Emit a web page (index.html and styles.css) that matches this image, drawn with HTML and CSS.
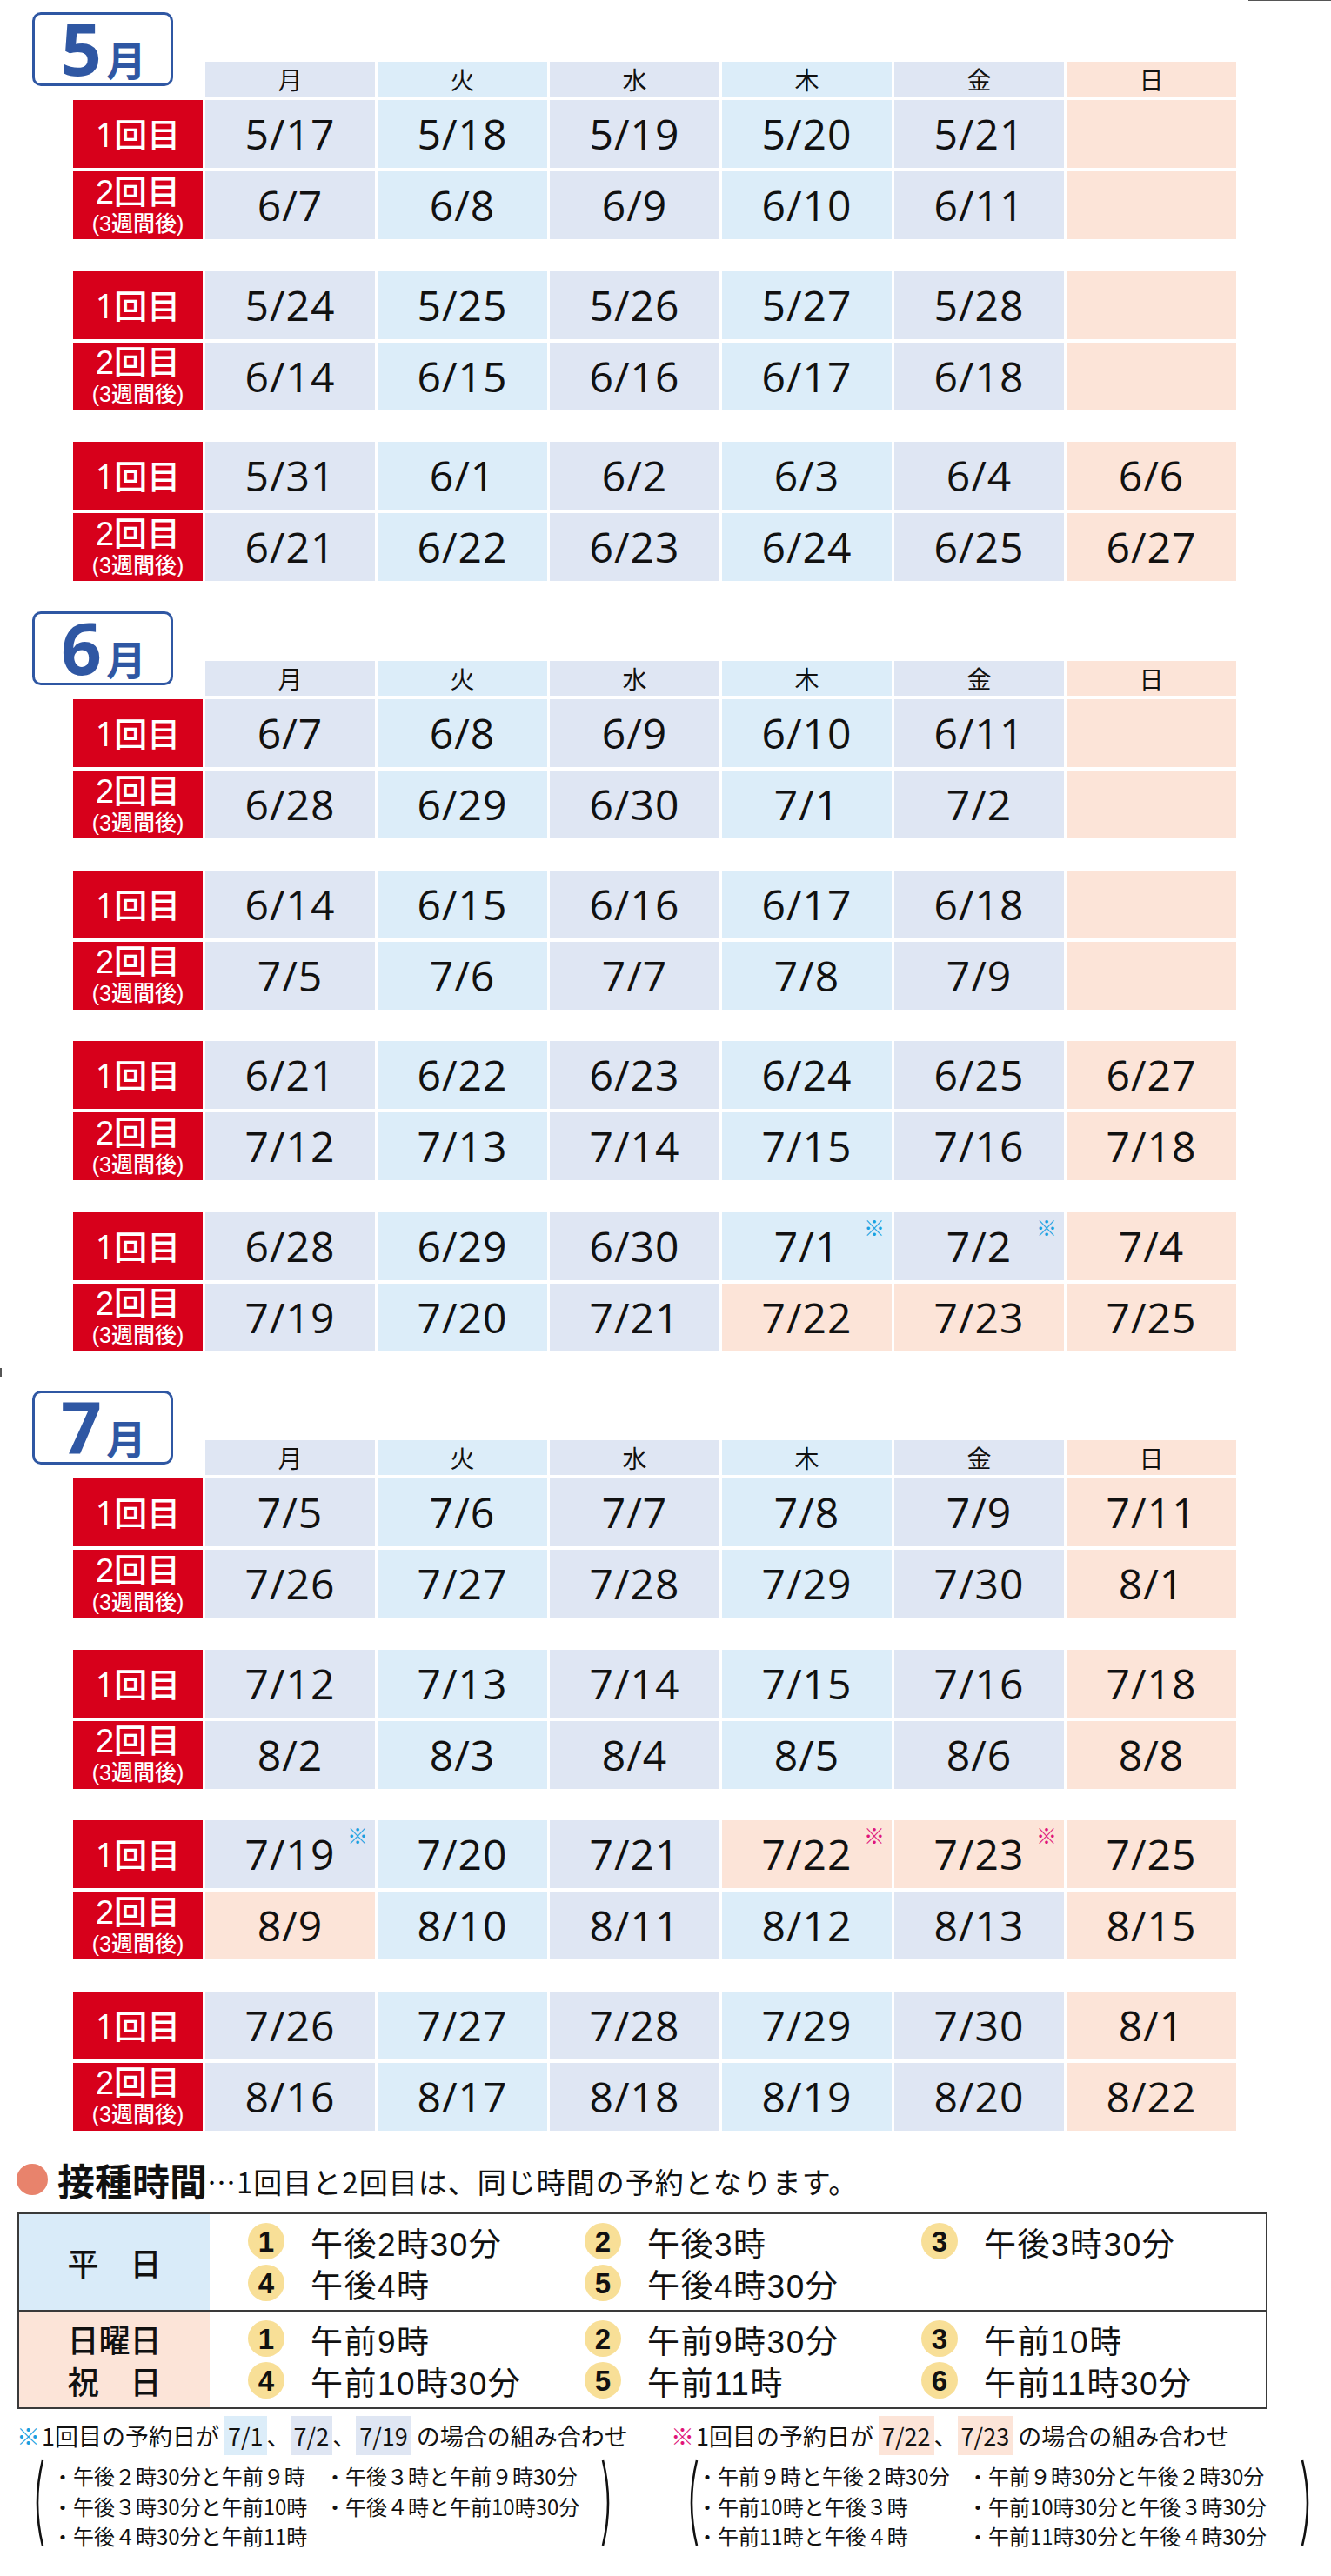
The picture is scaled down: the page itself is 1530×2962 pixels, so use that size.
FILE: index.html
```html
<!DOCTYPE html>
<html lang="ja">
<head>
<meta charset="utf-8">
<title>接種日程</title>
<link rel="stylesheet" href="styles.css">
</head>
<body>
<div class="page">
  <i class="edge-tr"></i>
  <i class="edge-l"></i>

  <!-- 5月 -->
  <section class="month">
    <div class="month-badge"><span class="mnum">5</span><span class="mchar">月</span></div>
    <div class="row week-head"><span></span><span>月</span><span>火</span><span>水</span><span>木</span><span>金</span><span>日</span></div>
    <div class="groups">
      <div class="group">
        <div class="row"><div class="lbl">1回目</div><div class="c">5/17</div><div class="c">5/18</div><div class="c">5/19</div><div class="c">5/20</div><div class="c">5/21</div><div class="c"></div></div>
        <div class="row"><div class="lbl lbl2"><span>2回目</span><small>(3週間後)</small></div><div class="c">6/7</div><div class="c">6/8</div><div class="c">6/9</div><div class="c">6/10</div><div class="c">6/11</div><div class="c"></div></div>
      </div>
      <div class="group">
        <div class="row"><div class="lbl">1回目</div><div class="c">5/24</div><div class="c">5/25</div><div class="c">5/26</div><div class="c">5/27</div><div class="c">5/28</div><div class="c"></div></div>
        <div class="row"><div class="lbl lbl2"><span>2回目</span><small>(3週間後)</small></div><div class="c">6/14</div><div class="c">6/15</div><div class="c">6/16</div><div class="c">6/17</div><div class="c">6/18</div><div class="c"></div></div>
      </div>
      <div class="group">
        <div class="row"><div class="lbl">1回目</div><div class="c">5/31</div><div class="c">6/1</div><div class="c">6/2</div><div class="c">6/3</div><div class="c">6/4</div><div class="c">6/6</div></div>
        <div class="row"><div class="lbl lbl2"><span>2回目</span><small>(3週間後)</small></div><div class="c">6/21</div><div class="c">6/22</div><div class="c">6/23</div><div class="c">6/24</div><div class="c">6/25</div><div class="c">6/27</div></div>
      </div>
    </div>
  </section>

  <!-- 6月 -->
  <section class="month">
    <div class="month-badge"><span class="mnum">6</span><span class="mchar">月</span></div>
    <div class="row week-head"><span></span><span>月</span><span>火</span><span>水</span><span>木</span><span>金</span><span>日</span></div>
    <div class="groups">
      <div class="group">
        <div class="row"><div class="lbl">1回目</div><div class="c">6/7</div><div class="c">6/8</div><div class="c">6/9</div><div class="c">6/10</div><div class="c">6/11</div><div class="c"></div></div>
        <div class="row"><div class="lbl lbl2"><span>2回目</span><small>(3週間後)</small></div><div class="c">6/28</div><div class="c">6/29</div><div class="c">6/30</div><div class="c">7/1</div><div class="c">7/2</div><div class="c"></div></div>
      </div>
      <div class="group">
        <div class="row"><div class="lbl">1回目</div><div class="c">6/14</div><div class="c">6/15</div><div class="c">6/16</div><div class="c">6/17</div><div class="c">6/18</div><div class="c"></div></div>
        <div class="row"><div class="lbl lbl2"><span>2回目</span><small>(3週間後)</small></div><div class="c">7/5</div><div class="c">7/6</div><div class="c">7/7</div><div class="c">7/8</div><div class="c">7/9</div><div class="c"></div></div>
      </div>
      <div class="group">
        <div class="row"><div class="lbl">1回目</div><div class="c">6/21</div><div class="c">6/22</div><div class="c">6/23</div><div class="c">6/24</div><div class="c">6/25</div><div class="c">6/27</div></div>
        <div class="row"><div class="lbl lbl2"><span>2回目</span><small>(3週間後)</small></div><div class="c">7/12</div><div class="c">7/13</div><div class="c">7/14</div><div class="c">7/15</div><div class="c">7/16</div><div class="c">7/18</div></div>
      </div>
      <div class="group">
        <div class="row"><div class="lbl">1回目</div><div class="c">6/28</div><div class="c">6/29</div><div class="c">6/30</div><div class="c">7/1<i class="mark cy">※</i></div><div class="c">7/2<i class="mark cy">※</i></div><div class="c">7/4</div></div>
        <div class="row"><div class="lbl lbl2"><span>2回目</span><small>(3週間後)</small></div><div class="c">7/19</div><div class="c">7/20</div><div class="c">7/21</div><div class="c pk">7/22</div><div class="c pk">7/23</div><div class="c">7/25</div></div>
      </div>
    </div>
  </section>

  <!-- 7月 -->
  <section class="month jul">
    <div class="month-badge"><span class="mnum">7</span><span class="mchar">月</span></div>
    <div class="row week-head"><span></span><span>月</span><span>火</span><span>水</span><span>木</span><span>金</span><span>日</span></div>
    <div class="groups">
      <div class="group">
        <div class="row"><div class="lbl">1回目</div><div class="c">7/5</div><div class="c">7/6</div><div class="c">7/7</div><div class="c">7/8</div><div class="c">7/9</div><div class="c">7/11</div></div>
        <div class="row"><div class="lbl lbl2"><span>2回目</span><small>(3週間後)</small></div><div class="c">7/26</div><div class="c">7/27</div><div class="c">7/28</div><div class="c">7/29</div><div class="c">7/30</div><div class="c">8/1</div></div>
      </div>
      <div class="group">
        <div class="row"><div class="lbl">1回目</div><div class="c">7/12</div><div class="c">7/13</div><div class="c">7/14</div><div class="c">7/15</div><div class="c">7/16</div><div class="c">7/18</div></div>
        <div class="row"><div class="lbl lbl2"><span>2回目</span><small>(3週間後)</small></div><div class="c">8/2</div><div class="c">8/3</div><div class="c">8/4</div><div class="c">8/5</div><div class="c">8/6</div><div class="c">8/8</div></div>
      </div>
      <div class="group">
        <div class="row"><div class="lbl">1回目</div><div class="c">7/19<i class="mark cy">※</i></div><div class="c">7/20</div><div class="c">7/21</div><div class="c pk">7/22<i class="mark mg">※</i></div><div class="c pk">7/23<i class="mark mg">※</i></div><div class="c">7/25</div></div>
        <div class="row"><div class="lbl lbl2"><span>2回目</span><small>(3週間後)</small></div><div class="c pk">8/9</div><div class="c">8/10</div><div class="c">8/11</div><div class="c">8/12</div><div class="c">8/13</div><div class="c">8/15</div></div>
      </div>
      <div class="group">
        <div class="row"><div class="lbl">1回目</div><div class="c">7/26</div><div class="c">7/27</div><div class="c">7/28</div><div class="c">7/29</div><div class="c">7/30</div><div class="c">8/1</div></div>
        <div class="row"><div class="lbl lbl2"><span>2回目</span><small>(3週間後)</small></div><div class="c">8/16</div><div class="c">8/17</div><div class="c">8/18</div><div class="c">8/19</div><div class="c">8/20</div><div class="c">8/22</div></div>
      </div>
    </div>
  </section>

  <!-- 接種時間 -->
  <div class="times-head">
    <span class="dot"></span>
    <span class="th-title">接種時間</span><span class="th-sub">…1回目と2回目は、同じ時間の予約となります。</span>
  </div>

  <div class="ttable">
    <div class="trow">
      <div class="tkey weekday"><span>平　日</span></div>
      <div class="tval">
        <div class="slot"><span class="badge">1</span><span class="tt">午後2時30分</span></div>
        <div class="slot"><span class="badge">2</span><span class="tt">午後3時</span></div>
        <div class="slot"><span class="badge">3</span><span class="tt">午後3時30分</span></div>
        <div class="slot"><span class="badge">4</span><span class="tt">午後4時</span></div>
        <div class="slot"><span class="badge">5</span><span class="tt">午後4時30分</span></div>
      </div>
    </div>
    <div class="trow">
      <div class="tkey holiday"><span>日曜日</span><span>祝　日</span></div>
      <div class="tval">
        <div class="slot"><span class="badge">1</span><span class="tt">午前9時</span></div>
        <div class="slot"><span class="badge">2</span><span class="tt">午前9時30分</span></div>
        <div class="slot"><span class="badge">3</span><span class="tt">午前10時</span></div>
        <div class="slot"><span class="badge">4</span><span class="tt">午前10時30分</span></div>
        <div class="slot"><span class="badge">5</span><span class="tt">午前11時</span></div>
        <div class="slot"><span class="badge">6</span><span class="tt">午前11時30分</span></div>
      </div>
    </div>
  </div>

  <div class="notes">
    <div class="note note-l">
      <div class="note-h"><span class="kome cy">※</span>1回目の予約日が <span class="hl hl-b2">7/1</span>、<span class="hl hl-b1">7/2</span>、<span class="hl hl-b1">7/19</span> の場合の組み合わせ</div>
      <div class="note-b">
        <svg class="paren" viewBox="0 0 14 100" width="14" height="100"><path d="M12 1 Q0 50 12 99" /></svg>
        <div class="lines">
          <span>・午後２時30分と午前９時</span><span>・午後３時と午前９時30分</span>
          <span>・午後３時30分と午前10時</span><span>・午後４時と午前10時30分</span>
          <span>・午後４時30分と午前11時</span><span></span>
        </div>
        <svg class="paren" viewBox="0 0 14 100" width="14" height="100"><path d="M2 1 Q14 50 2 99" /></svg>
      </div>
    </div>
    <div class="note note-r">
      <div class="note-h"><span class="kome mg">※</span>1回目の予約日が <span class="hl hl-pk">7/22</span>、<span class="hl hl-pk">7/23</span> の場合の組み合わせ</div>
      <div class="note-b">
        <svg class="paren" viewBox="0 0 14 100" width="14" height="100"><path d="M12 1 Q0 50 12 99" /></svg>
        <div class="lines">
          <span>・午前９時と午後２時30分</span><span>・午前９時30分と午後２時30分</span>
          <span>・午前10時と午後３時</span><span>・午前10時30分と午後３時30分</span>
          <span>・午前11時と午後４時</span><span>・午前11時30分と午後４時30分</span>
        </div>
        <svg class="paren" viewBox="0 0 14 100" width="14" height="100"><path d="M2 1 Q14 50 2 99" /></svg>
      </div>
    </div>
  </div>
</div>
</body>
</html>
```

FILE: styles.css
```css
body {
  margin: 0;
  background: #ffffff;
  color: #111111;
  font-family: "Noto Sans CJK JP", "Noto Sans", sans-serif;
}

.page {
  position: relative;
  width: 1530px;
  padding-top: 14px;
  padding-bottom: 20px;
}

.edge-tr {
  position: absolute;
  top: 0;
  right: 0;
  width: 95px;
  height: 1px;
  background: #555;
}
.edge-l {
  position: absolute;
  left: 0;
  top: 1573px;
  width: 2px;
  height: 10px;
  background: #555;
}

/* ---------- month blocks ---------- */
.month {
  padding-left: 84px;
}
.month + .month {
  margin-top: 35px;
}
.month.jul {
  margin-top: 45.5px;
}

.month-badge {
  box-sizing: border-box;
  width: 162px;
  height: 85px;
  margin-left: -47px;
  border: 3px solid #2f57a3;
  border-radius: 10px;
  display: flex;
  align-items: baseline;
  padding-left: 30px;
  color: #2f57a3;
}
.mnum {
  font-family: "Open Sans", sans-serif;
  font-weight: 700;
  font-size: 82px;
  line-height: 76px;
}
.mchar {
  font-family: "Noto Sans CJK JP", sans-serif;
  font-weight: 700;
  font-size: 46px;
  line-height: 1;
  margin-left: 5px;
}

.row {
  display: grid;
  grid-template-columns: 149px repeat(6, 195px);
  column-gap: 3px;
}
.row > :nth-child(2n) { background: #dfe6f3; }
.row > :nth-child(3),
.row > :nth-child(5) { background: #dcedf9; }
.row > :nth-child(7) { background: #fce4d8; }
.row > .pk { background: #fce4d8; }
.row > .lbl { background: #d7001b; }

.week-head {
  margin-top: -28px;
  height: 40px;
}
.week-head > span {
  display: flex;
  align-items: center;
  justify-content: center;
  font-size: 28px;
  line-height: 1;
}
.week-head > span:first-child {
  background: transparent;
}

.groups {
  margin-top: 4px;
  display: flex;
  flex-direction: column;
  gap: 36.5px;
}
.group {
  display: flex;
  flex-direction: column;
  gap: 4px;
}
.group .row {
  height: 78px;
}

.c {
  position: relative;
  display: flex;
  align-items: center;
  justify-content: center;
  font-family: "Open Sans", "Noto Sans CJK JP", sans-serif;
  font-size: 48px;
  line-height: 1;
  letter-spacing: 1px;
  color: #111;
}
.mark {
  position: absolute;
  top: 5px;
  right: 8px;
  font-style: normal;
  font-family: "Noto Sans CJK JP", sans-serif;
  font-size: 24px;
  line-height: 1;
  letter-spacing: 0;
}
.cy { color: #1aa0e0; }
.mg { color: #e0157a; }

.lbl {
  display: flex;
  flex-direction: column;
  align-items: center;
  justify-content: center;
  color: #ffffff;
  font-family: "Open Sans", "Noto Sans CJK JP", sans-serif;
  font-weight: 500;
  font-size: 38px;
  line-height: 1;
}
.lbl2 {
  padding-bottom: 2px;
  box-sizing: border-box;
  font-family: "Liberation Sans", "Noto Sans CJK JP", sans-serif;
}
.lbl2 span {
  line-height: 44px;
}
.lbl2 small {
  font-family: "Liberation Sans", "Noto Sans CJK JP", sans-serif;
  font-size: 25px;
  font-weight: 500;
  line-height: 29px;
}

/* ---------- times ---------- */
.times-head {
  margin-top: 31.5px;
  height: 50px;
  padding-left: 19px;
  display: flex;
  align-items: center;
}
.dot {
  width: 36px;
  height: 36px;
  border-radius: 50%;
  background: #e8836c;
  margin-right: 11px;
  flex: none;
}
.th-title {
  font-size: 43px;
  font-weight: 700;
  line-height: 50px;
}
.th-sub {
  font-size: 33px;
  letter-spacing: 1px;
  line-height: 50px;
  padding-top: 4px;
}

.ttable {
  margin: 13px 0 0 20px;
  width: 1437px;
  box-sizing: border-box;
  border: 2px solid #3a3a3a;
}
.trow {
  display: grid;
  grid-template-columns: 219px 1fr;
}
.trow + .trow {
  border-top: 2px solid #3a3a3a;
}
.tkey {
  display: flex;
  flex-direction: column;
  align-items: center;
  justify-content: center;
  box-sizing: border-box;
  padding-top: 8px;
  font-family: "Liberation Sans", "Noto Sans CJK JP", sans-serif;
  font-size: 36px;
  font-weight: 500;
  line-height: 48px;
}
.tkey.weekday { background: #d9ebf9; }
.tkey.holiday { background: #fce4d8; }
.tval {
  display: grid;
  grid-template-columns: repeat(3, 387px);
  padding: 7px 0 7px 44px;
}
.slot {
  display: flex;
  align-items: center;
  gap: 30px;
  height: 48px;
}
.tt {
  margin-top: 8px;
  font-family: "Liberation Sans", "Noto Sans CJK JP", sans-serif;
  font-size: 37px;
  letter-spacing: 1.5px;
  line-height: 1;
}
.badge {
  flex: none;
  width: 42px;
  height: 42px;
  border-radius: 50%;
  background: #f8df97;
  display: flex;
  align-items: center;
  justify-content: center;
  font-family: "Liberation Sans", "Noto Sans CJK JP", sans-serif;
  font-size: 33px;
  font-weight: 700;
  line-height: 1;
}

/* ---------- notes ---------- */
.notes {
  margin-top: 11px;
  padding-left: 19px;
  display: flex;
}
.note-l { width: 752px; }
.note-h {
  font-size: 27px;
  line-height: 40px;
  white-space: nowrap;
}
.kome { margin-right: 2px; }
.hl { padding: 3px 4px; }
.hl-b1 { background: #dfe6f3; }
.hl-b2 { background: #dcedf9; }
.hl-pk { background: #fce4d8; }

.note-b {
  margin-top: 9px;
  display: flex;
  align-items: flex-start;
  margin-left: 18px;
}
.paren {
  flex: none;
  margin-top: -2px;
}
.paren path {
  fill: none;
  stroke: #111;
  stroke-width: 2.6;
}
.lines {
  display: grid;
  font-size: 24px;
  line-height: 34.5px;
  white-space: nowrap;
}
.note-l .lines {
  margin-left: 9px;
  width: 631px;
  grid-template-columns: 313px 1fr;
}
.note-r .lines {
  margin-left: -2px;
  width: 694px;
  grid-template-columns: 311px 1fr;
}
```
